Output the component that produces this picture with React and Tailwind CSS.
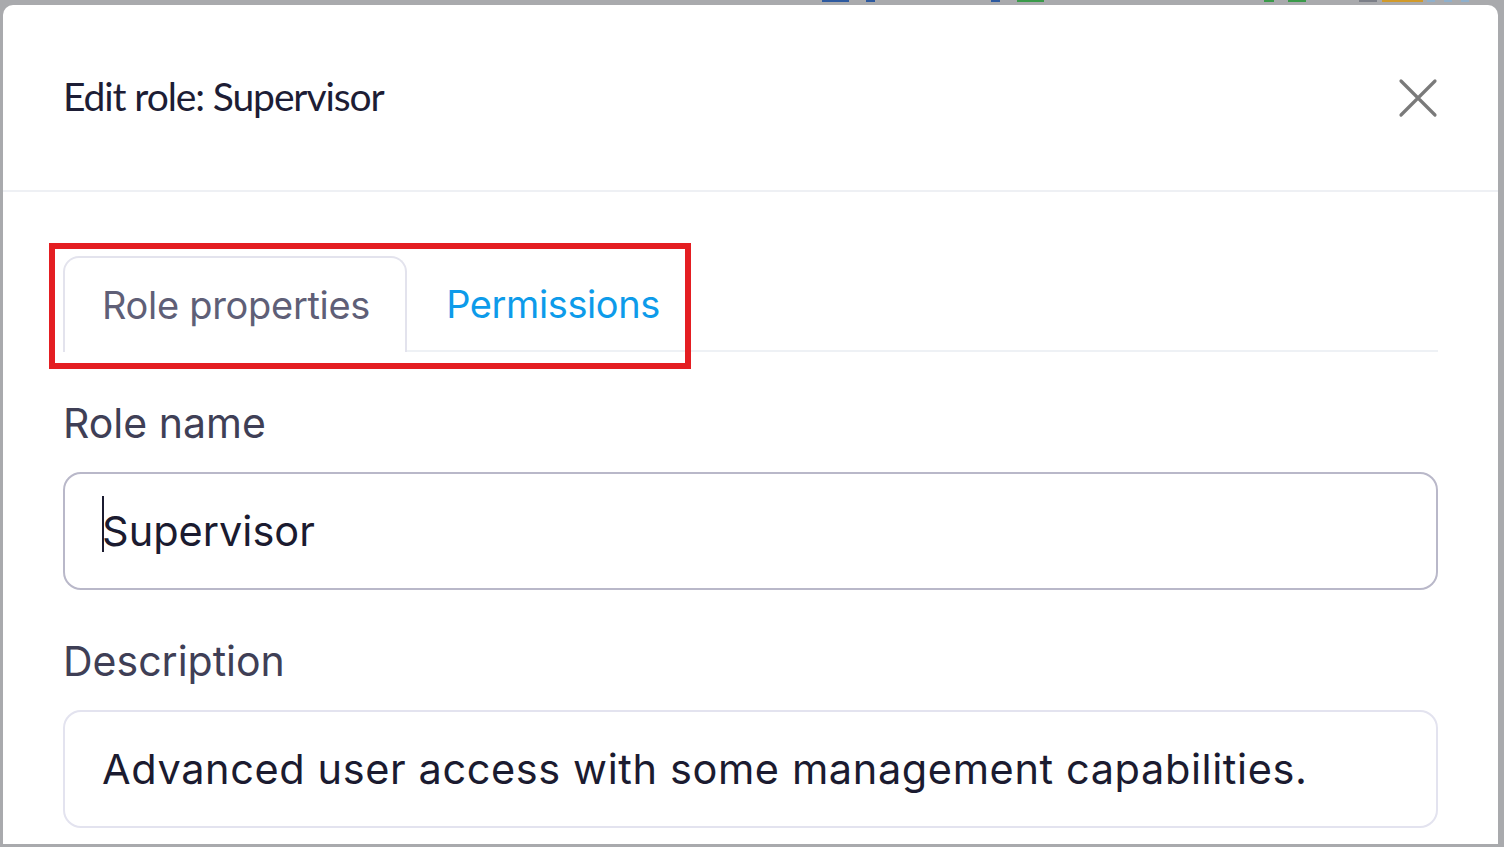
import React from 'react';

const BITS = [
  { left: 822, width: 27, bg: 'bg-[#2d5aa0]' },
  { left: 866, width: 9, bg: 'bg-[#2d5aa0]' },
  { left: 991, width: 9, bg: 'bg-[#2d5aa0]' },
  { left: 1017, width: 27, bg: 'bg-[#3a9a4a]' },
  { left: 1264, width: 10, bg: 'bg-[#3a9a4a]' },
  { left: 1288, width: 18, bg: 'bg-[#3a9a4a]' },
  { left: 1359, width: 18, bg: 'bg-[#7c7f88]' },
  { left: 1382, width: 41, bg: 'bg-[#d19a2a]' },
  { left: 1427, width: 8, bg: 'bg-[#8fb0cc]' },
  { left: 1444, width: 8, bg: 'bg-[#8fb0cc]' },
  { left: 1461, width: 8, bg: 'bg-[#8fb0cc]' },
];

const CloseIcon = () => (
  <svg width="40" height="40" viewBox="0 0 40 40" fill="none">
    <path d="M3 3L37 37M37 3L3 37" stroke="#7a7a7a" strokeWidth="3.2" strokeLinecap="round" />
  </svg>
);

const Field = ({ label, value, caret, borderColor, tracking }) => (
  <div className="flex flex-col">
    <label className="text-[41px] leading-[50px] text-[#3f3f56] tracking-[0px]">{label}</label>
    <div className={`mt-[24px] h-[118px] rounded-[18px] border-2 ${borderColor} flex items-center pl-[37px]`}>
      <div className="relative flex items-center">
        {caret && <span className="absolute left-0 top-[-4px] h-[56px] w-[1.5px] bg-[#1b1b30]" />}
        <span className={`text-[41.5px] text-[#1b1b30] ${tracking}`}>{value}</span>
      </div>
    </div>
  </div>
);

export default function App() {
  return (
    <div className="h-[847px] w-[1504px] overflow-hidden bg-[#a9aaad] relative pt-[5px] pl-[3px] pr-[6px] pb-[3px]" style={{ fontFamily: 'Inter, sans-serif' }}>
      {BITS.map((b, i) => (
        <span key={i} className={`absolute top-0 h-[2px] ${b.bg}`} style={{ left: b.left, width: b.width }} />
      ))}
      <div className="h-full bg-white rounded-t-[10px] flex flex-col">
        <div className="h-[187px] flex items-center justify-between pl-[60px] pr-[60px] border-b-2 border-[#eef0f4]">
          <h1 className="text-[39px] text-[#1d1d35] tracking-[-1.1px] pb-[2px]" style={{ fontFamily: 'Lato, sans-serif' }}>
            Edit role: Supervisor
          </h1>
          <CloseIcon />
        </div>

        <div className="px-[60px] pt-[64px] flex flex-col">
          <div className="relative flex items-end border-b-2 border-[#eef1f5]">
            <span className="absolute left-[-14px] top-[-13px] w-[642px] h-[126px] border-[6px] border-[#e41e22] pointer-events-none" />
            <button className="h-[96px] -mb-[2px] pl-[37px] pr-[35px] border-2 border-b-0 border-[#e3e3ed] rounded-t-[16px] bg-white text-[38px] text-[#5f5f77] tracking-[-0.3px]">
              Role properties
            </button>
            <button className="h-[96px] -mb-[2px] px-[39px] text-[38px] text-[#0d9bea] tracking-[-0.4px]">
              Permissions
            </button>
          </div>

          <div className="mt-[46px] flex flex-col gap-[46px]">
            <Field label="Role name" value="Supervisor" caret borderColor="border-[#b9b8c9]" tracking="tracking-[0px]" />
            <Field label="Description" value="Advanced user access with some management capabilities." borderColor="border-[#e3e3ef]" tracking="tracking-[0.6px]" />
          </div>
        </div>
      </div>
    </div>
  );
}
